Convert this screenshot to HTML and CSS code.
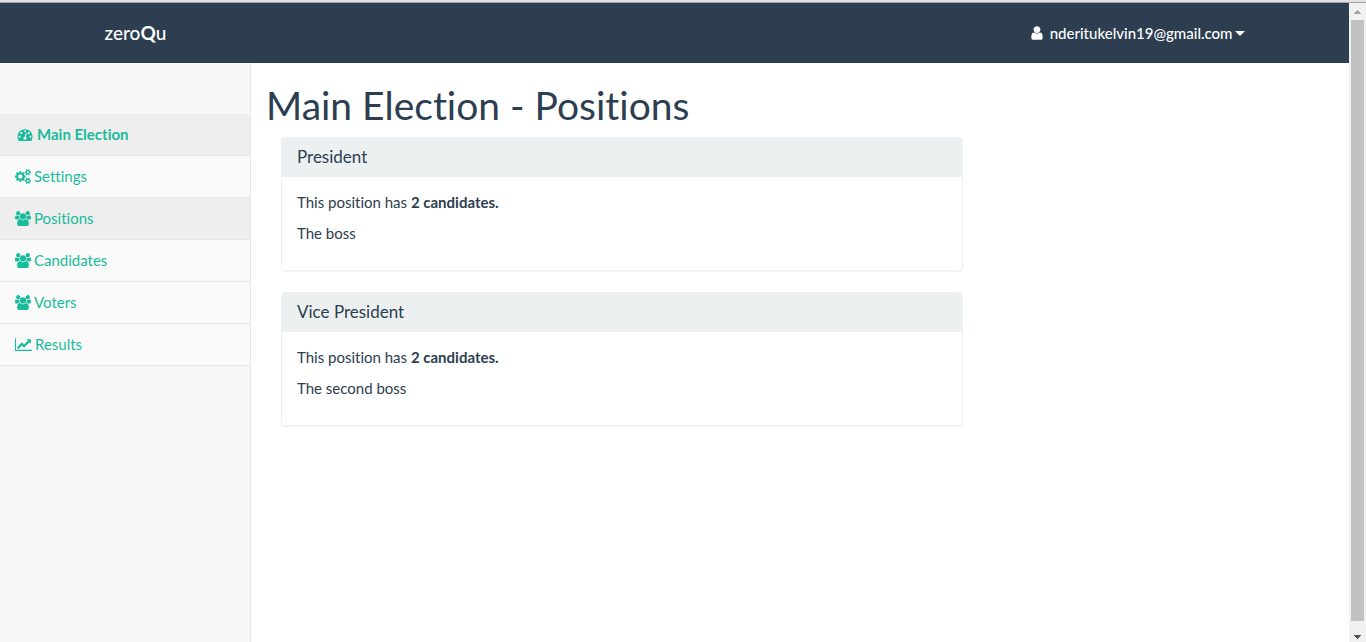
FILE: index.html
```html
<!DOCTYPE html>
<html lang="en">
<head>
<meta charset="utf-8">
<meta name="viewport" content="width=device-width, initial-scale=1">
<title>Main Election - Positions</title>
<link rel="stylesheet" href="styles.css">
</head>
<body>
<svg class="sprite" aria-hidden="true">
  <symbol id="dashboard" viewBox="0 0 1792 1792"><path d="M384 1152q0-53-37.5-90.5t-90.5-37.5-90.5 37.5-37.5 90.5 37.5 90.5 90.5 37.5 90.5-37.5 37.5-90.5zm192-448q0-53-37.5-90.5t-90.5-37.5-90.5 37.5-37.5 90.5 37.5 90.5 90.5 37.5 90.5-37.5 37.5-90.5zm428 481l101-382q6-26-7.5-48.5t-38.5-29.5-48 6.5-30 39.5l-101 382q-60 5-107 43.5t-63 98.5q-20 77 20 146t117 89 146-20 89-117q16-60-6-117t-72-91zm660-33q0-53-37.5-90.5t-90.5-37.5-90.5 37.5-37.5 90.5 37.5 90.5 90.5 37.5 90.5-37.5 37.5-90.5zm-640-640q0-53-37.5-90.5t-90.5-37.5-90.5 37.5-37.5 90.5 37.5 90.5 90.5 37.5 90.5-37.5 37.5-90.5zm448 192q0-53-37.5-90.5t-90.5-37.5-90.5 37.5-37.5 90.5 37.5 90.5 90.5 37.5 90.5-37.5 37.5-90.5zm320 448q0 261-141 483-19 29-54 29h-1402q-35 0-54-29-141-221-141-483 0-182 71-348t191-286 286-191 348-71 348 71 286 191 191 286 71 348z"/></symbol>
  <symbol id="cogs" viewBox="-64 0 1920 1792"><path d="M832 896q0-106-75-181t-181-75-181 75-75 181 75 181 181 75 181-75 75-181zm768 512q0-52-38-90t-90-38-90 38-38 90q0 53 37.5 90.5t90.5 37.5 90.5-37.5 37.5-90.5zm0-1024q0-52-38-90t-90-38-90 38-38 90q0 53 37.5 90.5t90.5 37.5 90.5-37.5 37.5-90.5zm-384 421v185q0 10-7 19.5t-16 10.5l-155 24q-11 35-32 76 34 48 90 115 7 11 7 20 0 12-7 19-23 30-82.5 89.5t-78.5 59.5q-11 0-21-7l-115-90q-37 19-77 31-11 108-23 155-7 24-30 24h-186q-11 0-20-7.5t-10-17.5l-23-153q-34-10-75-31l-118 89q-7 7-20 7-11 0-21-8-144-133-144-160 0-9 7-19 10-14 41-53t47-61q-23-44-35-82l-152-24q-10-1-17-9.5t-7-19.5v-185q0-10 7-19.5t16-10.5l155-24q11-35 32-76-34-48-90-115-7-11-7-20 0-12 7-20 22-30 82-89t79-59q11 0 21 7l115 90q34-18 77-32 11-108 23-154 7-24 30-24h186q11 0 20 7.5t10 17.5l23 153q34 10 75 31l118-89q8-7 20-7 11 0 21 8 144 133 144 160 0 8-7 19-12 16-42 54t-45 60q23 48 34 82l152 23q10 2 17 10.5t7 19.5zm640 533v140q0 16-149 31-12 27-30 52 51 113 51 138 0 4-4 7-122 71-124 71-8 0-46-47t-52-68q-20 2-30 2t-30-2q-14 21-52 68t-46 47q-2 0-124-71-4-3-4-7 0-25 51-138-18-25-30-52-149-15-149-31v-140q0-16 149-31 13-29 30-52-51-113-51-138 0-4 4-7 4-2 35-20t59-34 30-16q8 0 46 46.5t52 67.5q20-2 30-2t30 2q51-71 92-112l6-2q4 0 124 70 4 3 4 7 0 25-51 138 17 23 30 52 149 15 149 31zm0-1024v140q0 16-149 31-12 27-30 52 51 113 51 138 0 4-4 7-122 71-124 71-8 0-46-47t-52-68q-20 2-30 2t-30-2q-14 21-52 68t-46 47q-2 0-124-71-4-3-4-7 0-25 51-138-18-25-30-52-149-15-149-31v-140q0-16 149-31 13-29 30-52-51-113-51-138 0-4 4-7 4-2 35-20t59-34 30-16q8 0 46 46.5t52 67.5q20-2 30-2t30 2q51-71 92-112l6-2q4 0 124 70 4 3 4 7 0 25-51 138 17 23 30 52 149 15 149 31z"/></symbol>
  <symbol id="users" viewBox="-64 0 1920 1792"><path d="M529 896q-162 5-265 128h-134q-82 0-138-40.5t-56-118.5q0-353 124-353 6 0 43.5 21t97.5 42.5 119 21.5q67 0 133-23-5 37-5 66 0 139 81 256zm1071 637q0 120-73 189.5t-194 69.5h-874q-121 0-194-69.5t-73-189.5q0-53 3.5-103.5t14-109 26.5-108.5 43-97.5 62-81 85.5-53.5 111.5-20q10 0 43 21.5t73 48 107 48 135 21.5 135-21.5 107-48 73-48 43-21.5q61 0 111.5 20t85.5 53.5 62 81 43 97.5 26.5 108.5 14 109 3.5 103.5zm-1024-1277q0 106-75 181t-181 75-181-75-75-181 75-181 181-75 181 75 75 181zm704 384q0 159-112.5 271.5t-271.5 112.5-271.5-112.5-112.5-271.5 112.5-271.5 271.5-112.5 271.5 112.5 112.5 271.5zm576 225q0 78-56 118.5t-138 40.5h-134q-103-123-265-128 81-117 81-256 0-29-5-66 66 23 133 23 59 0 119-21.5t97.5-42.5 43.5-21q124 0 124 353zm-128-609q0 106-75 181t-181 75-181-75-75-181 75-181 181-75 181 75 75 181z"/></symbol>
  <symbol id="chart" viewBox="0 0 2048 1792"><path d="M2048 1536v128h-2048v-1536h128v1408h1920zm-128-1248v435q0 21-19.5 29.5t-35.5-7.5l-121-121-633 633q-10 10-23 10t-23-10l-233-233-416 416-192-192 585-585q10-10 23-10t23 10l233 233 464-464-121-121q-16-16-7.5-35.5t29.5-19.5h435q14 0 23 9t9 23z"/></symbol>
  <symbol id="user" viewBox="256 0 1280 1792"><path d="M1536 1399q0 109-62.5 187t-150.5 78h-854q-88 0-150.5-78t-62.5-187q0-85 8.5-160.5t31.5-152 58.5-131 94-89 134.5-34.5q131 128 313 128t313-128q76 0 134.5 34.5t94 89 58.5 131 31.5 152 8.5 160.5zm-256-887q0 159-112.5 271.5t-271.5 112.5-271.5-112.5-112.5-271.5 112.5-271.5 271.5-112.5 271.5 112.5 112.5 271.5z"/></symbol>
</svg>
<div class="window">
  <div class="page">
    <header class="navbar">
      <div class="container">
        <a class="brand" href="#">zero<b>Q</b>u</a>
        <button class="account" type="button">
          <svg class="icon-user" aria-hidden="true"><use href="#user"/></svg>
          <span>nderitukelvin19@gmail.com</span>
          <span class="caret"></span>
        </button>
      </div>
    </header>
    <div class="layout">
      <nav class="sidebar">
        <a class="item current title" href="#"><svg class="icon" aria-hidden="true"><use href="#dashboard"/></svg>Main Election</a>
        <a class="item" href="#"><svg class="icon" aria-hidden="true"><use href="#cogs"/></svg>Settings</a>
        <a class="item current" href="#"><svg class="icon" aria-hidden="true"><use href="#users"/></svg>Positions</a>
        <a class="item" href="#"><svg class="icon" aria-hidden="true"><use href="#users"/></svg>Candidates</a>
        <a class="item" href="#"><svg class="icon" aria-hidden="true"><use href="#users"/></svg>Voters</a>
        <a class="item" href="#"><svg class="icon wide" aria-hidden="true"><use href="#chart"/></svg>Results</a>
      </nav>
      <main class="content">
        <h1>Main Election - Positions</h1>
        <div class="column">
          <section class="panel">
            <h2>President</h2>
            <div class="panel-body">
              <p>This position has <b>2 candidates.</b></p>
              <p>The boss</p>
            </div>
          </section>
          <section class="panel">
            <h2>Vice President</h2>
            <div class="panel-body">
              <p>This position has <b>2 candidates.</b></p>
              <p>The second boss</p>
            </div>
          </section>
        </div>
      </main>
    </div>
  </div>
  <div class="scrollbar" aria-hidden="true">
    <svg class="arrow up" viewBox="0 0 7 4"><path d="M3 0h1v1h1v1h1v1h1v1H0V3h1V2h1V1h1z"/></svg>
    <div class="thumb"></div>
    <svg class="arrow" viewBox="0 0 7 4"><path d="M0 0h7v1H6v1H5v1H4v1H3V3H2V2H1V1H0z"/></svg>
  </div>
</div>
</body>
</html>
```
FILE: styles.css
```css
* {
  box-sizing: border-box;
}

body {
  margin: 0;
  display: flex;
  flex-direction: column;
  min-height: 100vh;
  border-top: 2px solid #e1e1e1;
  background: #fff;
  color: #2c3e50;
  font: 15px/21px Lato, "Open Sans", sans-serif;
  font-variant-ligatures: none;
}

.sprite {
  display: none;
}

.window {
  flex: 1;
  display: flex;
  border-top: 1px solid #a5a5a5;
}

.page {
  flex: 1;
  min-width: 0;
  display: flex;
  flex-direction: column;
}

.navbar {
  background: #2c3e50;
}

.container {
  display: flex;
  align-items: center;
  justify-content: space-between;
  max-width: 1170px;
  min-height: 60px;
  margin: 0 auto;
  padding: 0 15px;
}

.brand {
  padding-bottom: 2px;
  color: #fff;
  font-size: 19px;
  font-weight: 500;
  text-decoration: none;
}

.account {
  display: flex;
  align-items: center;
  gap: 2px;
  padding: 0;
  border: 0;
  background: none;
  color: #fff;
  font: inherit;
  font-weight: 500;
  font-variant-ligatures: none;
}

.icon-user {
  width: 12px;
  height: 16px;
  margin-right: 5px;
  fill: currentColor;
}

.caret {
  border: 5px solid transparent;
  border-top-color: currentColor;
  border-bottom: 0;
}

.layout {
  flex: 1;
  display: flex;
}

.sidebar {
  flex: 0 0 251px;
  padding-top: 51px;
  border-right: 1px solid #e7e7e7;
  background: #f8f8f8;
}

.item {
  display: flex;
  align-items: center;
  gap: 3px;
  padding: 10px 15px;
  border-bottom: 1px solid #e7e7e7;
  background: #fafafa;
  color: #18bc9c;
  text-decoration: none;
}

.current {
  background: #eee;
}

.title {
  gap: 4px;
  padding-left: 17px;
  font-weight: 700;
}

.icon {
  width: 16px;
  height: 15px;
  fill: currentColor;
}

.wide {
  width: 17px;
}

.content {
  flex: 1;
  min-width: 0;
  padding: 21px 15px;
}

h1 {
  margin: 0 0 10px;
  font-size: 39px;
  font-weight: 400;
  line-height: 43px;
}

.column {
  width: calc(100% * 2 / 3);
  padding: 0 15px;
}

.panel {
  margin-bottom: 21px;
  border: 1px solid #ecf0f1;
  border-radius: 4px;
  box-shadow: 0 1px 1px rgba(0, 0, 0, 0.05);
}

.panel h2 {
  margin: 0;
  padding: 9px 15px 11px;
  background: #ecf0f1;
  font-size: 17px;
  font-weight: 400;
  line-height: 19px;
}

.panel-body {
  padding: 15px 15px 16px;
}

.panel-body p {
  margin: 0 0 10px;
}

.scrollbar {
  flex: 0 0 17px;
  display: flex;
  flex-direction: column;
  align-items: center;
  gap: 6px;
  padding: 7px 0 3px;
  background: #f1f1f1;
}

.thumb {
  flex: 1;
  width: 13px;
  margin-bottom: 8px;
  background: #c1c1c1;
}

.arrow {
  width: 7px;
  height: 4px;
  fill: #505050;
}

.up {
  fill: #a3a3a3;
}
```
